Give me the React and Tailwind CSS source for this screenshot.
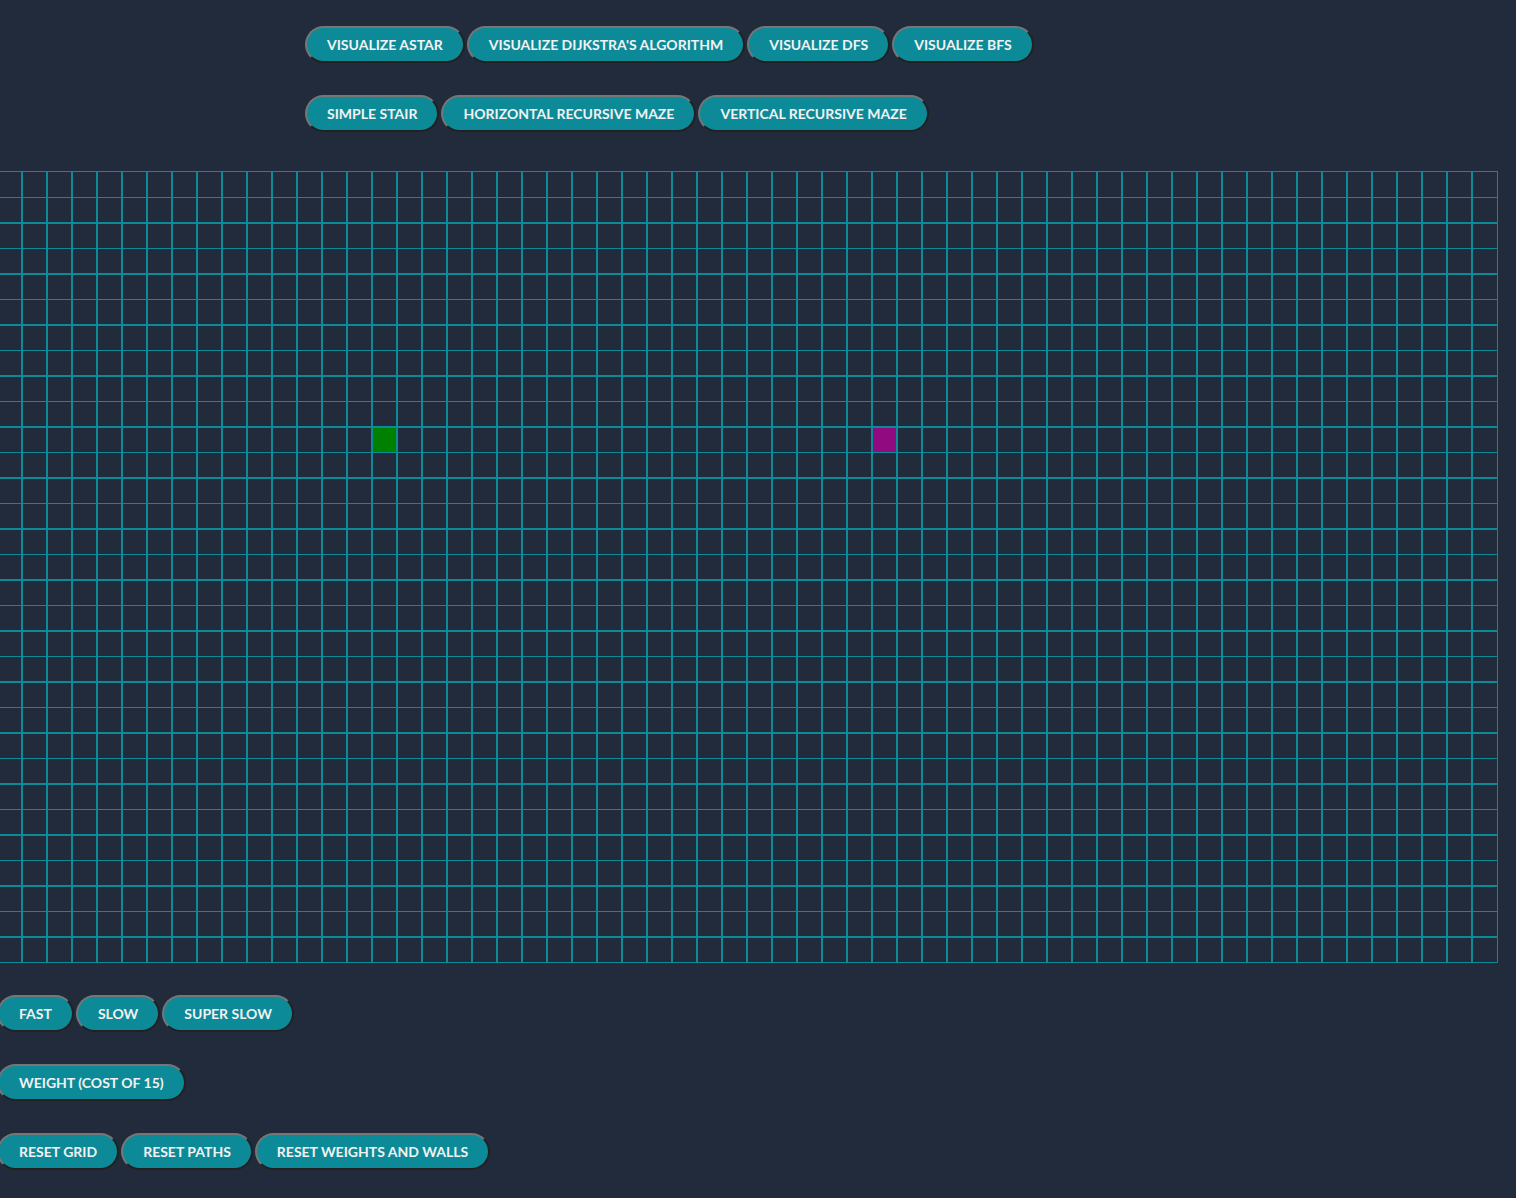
import React from "react";

const COLS = 60;
const ROWS = 31;
const START = [10, 15];
const END = [10, 35];

function Btn({ children }) {
  return (
    <button className="rounded-full border-2 border-[#767676] [border-style:outset] bg-[#0d8a98] px-5 py-[8px] text-[14px] font-bold uppercase leading-[17px] text-[#f2f2f2] whitespace-nowrap">
      {children}
    </button>
  );
}

function Row({ children, className = "" }) {
  return <div className={"flex gap-[2px] " + className}>{children}</div>;
}

export default function App() {
  const rows = [];
  for (let r = 0; r < ROWS; r++) {
    const cells = [];
    const odd = r % 2 === 1;
    const rowCls =
      r === 0
        ? "h-[26px] border-b"
        : odd
        ? "h-[26px] border-b-2"
        : "h-[25px] border-b";
    for (let c = 0; c < COLS; c++) {
      const last = c === COLS - 1;
      let bg = "";
      if (r === START[0] && c === START[1]) bg = "bg-[#008000]";
      else if (r === END[0] && c === END[1]) bg = "bg-[#910a80]";
      cells.push(
        <div
          key={c}
          className={
            "w-[25px] shrink-0 border-[#0d8a98] " +
            rowCls +
            " " +
            (last ? "border-r" : "border-r-2") +
            " " +
            bg
          }
        />
      );
    }
    rows.push(
      <div key={r} className="flex">
        {cells}
      </div>
    );
  }

  return (
    <div
      className="min-h-[1198px] w-full overflow-hidden bg-[#222b3c]"
      style={{ fontFamily: "Lato, 'Open Sans', sans-serif" }}
    >
      <div className="flex flex-col gap-[32px] pl-[305px] pt-[26px]">
        <Row>
          <Btn>Visualize Astar</Btn>
          <Btn>Visualize Dijkstra's Algorithm</Btn>
          <Btn>Visualize DFS</Btn>
          <Btn>Visualize BFS</Btn>
        </Row>
        <Row>
          <Btn>Simple Stair</Btn>
          <Btn>Horizontal Recursive Maze</Btn>
          <Btn>Vertical Recursive Maze</Btn>
        </Row>
      </div>
      <div className="mt-[39px] ml-[-2px] flex w-max flex-col border-t border-[#0d8a98]">
        {rows}
      </div>
      <div className="mt-[32px] ml-[-3px] flex flex-col gap-[32px] pb-[28px]">
        <Row>
          <Btn>Fast</Btn>
          <Btn>Slow</Btn>
          <Btn>Super Slow</Btn>
        </Row>
        <Row>
          <Btn>Weight (cost of 15)</Btn>
        </Row>
        <Row>
          <Btn>Reset Grid</Btn>
          <Btn>Reset Paths</Btn>
          <Btn>Reset Weights and Walls</Btn>
        </Row>
      </div>
    </div>
  );
}
